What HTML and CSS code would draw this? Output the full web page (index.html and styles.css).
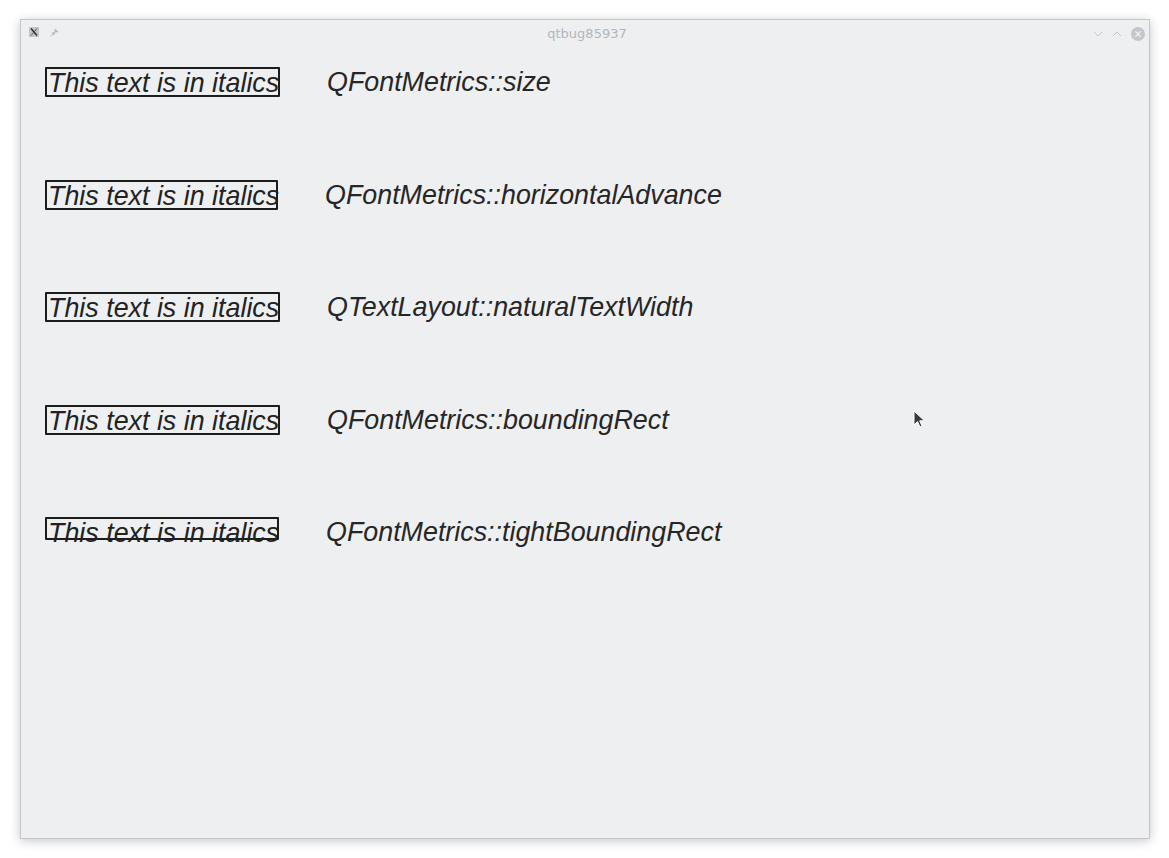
FILE: index.html
```html
<!DOCTYPE html>
<html lang="en">
<head>
	<meta charset="UTF-8">
	<title>qtbug85937</title>
	<link rel="stylesheet" href="styles.css">
</head>
<body>

	<div id="window">
		<div class="titlebar">
			<div class="tb-left">
				<svg class="app-icon" width="10" height="10" viewBox="0 0 10 10">
					<rect x="0" y="0" width="10" height="10" fill="#c4c6c9"/>
					<path d="M2 1.5 L8 8.5" stroke="#2d2d2d" stroke-width="1.5"/>
					<path d="M8 1.5 L2 8.5" stroke="#5a4a48" stroke-width="1"/>
					<path d="M1.5 8.5 L3.5 6.2" stroke="#d9732a" stroke-width="1"/>
				</svg>
				<svg class="pin" width="9" height="9" viewBox="0 0 9 9">
					<path d="M5 0.5 L8.5 4 L7.5 4.5 L6 4 L4.5 5.5 L4.5 7 L4 7.5 L1.5 5 L2 4.5 L3.5 4.5 L5 3 L4.5 1.5 Z" fill="#b5b8bc"/>
					<path d="M2.5 6.5 L0.5 8.5" stroke="#b5b8bc" stroke-width="1"/>
				</svg>
			</div>
			<div class="title">qtbug85937</div>
			<div class="tb-right">
				<svg width="10" height="6" viewBox="0 0 10 6">
					<path d="M1 1 L5 5 L9 1" fill="none" stroke="#c2c5c9" stroke-width="1"/>
				</svg>
				<svg width="10" height="6" viewBox="0 0 10 6">
					<path d="M1 5 L5 1 L9 5" fill="none" stroke="#c2c5c9" stroke-width="1"/>
				</svg>
				<svg width="14" height="14" viewBox="0 0 14 14">
					<circle cx="7" cy="7" r="7" fill="#c3c6ca"/>
					<path d="M4.3 4.3 L9.7 9.7 M9.7 4.3 L4.3 9.7" stroke="#eeeff1" stroke-width="1.4"/>
				</svg>
			</div>
		</div>

		<div class="content">
			<div class="row">
				<div class="box w235">This text is in italics</div>
				<div class="label">QFontMetrics::size</div>
			</div>
			<div class="row">
				<div class="box w233">This text is in italics</div>
				<div class="label">QFontMetrics::horizontalAdvance</div>
			</div>
			<div class="row">
				<div class="box w235">This text is in italics</div>
				<div class="label">QTextLayout::naturalTextWidth</div>
			</div>
			<div class="row">
				<div class="box w235">This text is in italics</div>
				<div class="label">QFontMetrics::boundingRect</div>
			</div>
			<div class="row">
				<div class="box w234 tight">This text is in italics</div>
				<div class="label">QFontMetrics::tightBoundingRect</div>
			</div>
		</div>

		<svg class="cursor" width="14" height="20" viewBox="0 0 14 20">
			<path d="M1 1 L1 15 L4.5 11.5 L7 17 L9 16 L6.7 10.8 L11.5 10.8 Z" fill="#3a3a3a" stroke="#ffffff" stroke-width="1"/>
		</svg>
	</div>

</body>
</html>
```

FILE: styles.css
```css
html,body{
	margin: 0;
	padding: 0;
	background-color: #ffffff;
}
body{
	width: 1169px;
	height: 858px;
	overflow: hidden;
}
#window{
	position: relative;
	margin: 19px 0 0 20px;
	width: 1128px;
	height: 818px;
	background-color: #eeeff1;
	border: 1px solid #c3c6ca;
	box-shadow: 0 2px 10px rgba(0,0,0,0.22);
}
.titlebar{
	height: 26px;
	display: flex;
	align-items: center;
	justify-content: space-between;
	padding: 0 4px 0 8px;
}
.tb-left{
	display: flex;
	align-items: center;
	gap: 11px;
	width: 120px;
	margin-top: -2px;
}
.title{
	font-family: "DejaVu Sans", "Noto Sans", sans-serif;
	font-size: 13px;
	color: #b3b6ba;
	margin-left: 0;
	margin-top: 1px;
}
.tb-right{
	display: flex;
	align-items: center;
	justify-content: flex-end;
	gap: 9px;
	width: 120px;
	margin-top: 1px;
}
.content{
	padding: 21px 0 0 24px;
}
.row{
	height: 112.5px;
	display: flex;
	align-items: baseline;
	gap: 47px;
}
.box{
	box-sizing: border-box;
	height: 30px;
	padding-left: 1px;
	border: 2px solid #1c1c1c;
	border-radius: 1px;
	white-space: nowrap;
	font-family: "Liberation Sans", Arial, sans-serif;
	font-style: italic;
	font-size: 26.85px;
	line-height: 28px;
	color: #222222;
}
.box.tight{
	height: 23px;
}
.w235{
	width: 235px;
}
.w234{
	width: 234px;
}
.w233{
	width: 233px;
}
.label{
	font-family: "Liberation Sans", Arial, sans-serif;
	font-style: italic;
	font-size: 26.85px;
	line-height: 28px;
	color: #262626;
	white-space: nowrap;
	position: relative;
	top: -1px;
}
.cursor{
	position: absolute;
	left: 892px;
	top: 390px;
}
```
